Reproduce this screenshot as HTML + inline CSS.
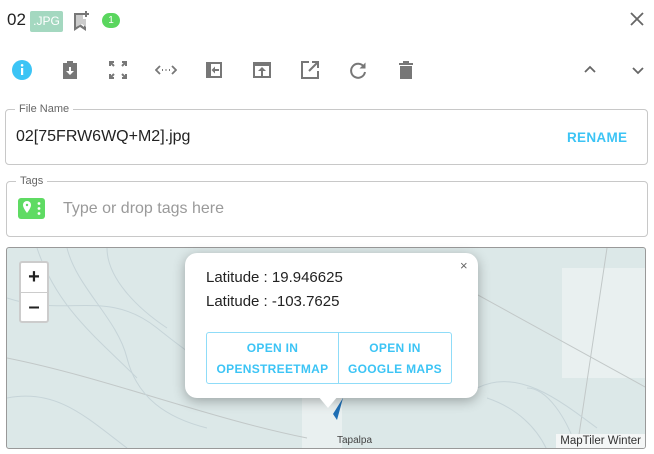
<!DOCTYPE html>
<html><head><style>
*{box-sizing:border-box;margin:0;padding:0}
body{width:654px;height:454px;background:#fff;font-family:"Liberation Sans",sans-serif;position:relative;overflow:hidden;color:#222}
.a{position:absolute}
.ic{position:absolute;top:59px;width:22px;height:22px}
fieldset{position:absolute;border:1px solid #c8c8c8;border-radius:4px}
legend{font-size:11px;color:#666;padding:0 4px;margin-left:9px}
.btn{position:absolute;top:332px;height:52px;border:1px solid #8fdcf8;color:#3cc4f5;font-size:12px;font-weight:bold;text-align:center;line-height:21px;padding-top:5px;letter-spacing:.3px}
</style></head><body>
<div class="a" style="left:7px;top:10px;font-size:17px">02</div>
<div class="a" style="left:30px;top:11px;width:33px;height:21px;background:#a4d8c0;color:#fff;font-size:12px;line-height:21px;text-align:center;border-radius:2px">.JPG</div>
<svg class="a" style="left:72px;top:10px" width="20" height="22" viewBox="0 0 20 22"><path d="M2 3h9v2H4v12l4-3 4 3V9h2v12l-6-4-6 4z" fill="#777"/><path d="M4 5h7v4h3v8l-4-3-6 3z" fill="#ccc"/><path d="M14 1v6M11 4h6" stroke="#777" stroke-width="2"/></svg>
<div class="a" style="left:102px;top:13px;width:18px;height:15px;background:#5ad65e;border-radius:8px;color:#fff;font-size:10px;text-align:center;line-height:15px">1</div>
<svg class="a" style="left:628px;top:10px" width="18" height="18"><path d="M3 3l12 12M15 3L3 15" stroke="#666" stroke-width="1.8"/></svg>

<svg class="ic" style="left:11px" viewBox="0 0 22 22"><circle cx="11" cy="11" r="10" fill="#3cc4f5"/><rect x="10" y="9" width="2.2" height="7" fill="#fff"/><circle cx="11.1" cy="6.3" r="1.3" fill="#fff"/></svg>
<svg class="ic" style="left:59px" viewBox="0 0 22 22"><path d="M4 4h4V2h6v2h4v16H4z" fill="#777"/><path d="M10 8h2v4h3l-4 4-4-4h3z" fill="#fff"/></svg>
<svg class="ic" style="left:107px" viewBox="0 0 22 22" fill="none" stroke="#777" stroke-width="2"><path d="M3 7V3h4M3 3l4 4M15 3h4v4M19 3l-4 4M19 15v4h-4M19 19l-4-4M7 19H3v-4M3 19l4-4"/></svg>
<svg class="ic" style="left:155px" viewBox="0 0 22 22" fill="none" stroke="#777" stroke-width="1.8"><path d="M5 7l-4 4 4 4M17 7l4 4-4 4"/><path d="M7 11h1M10.5 11h1M14 11h1" stroke-width="2"/></svg>
<svg class="ic" style="left:203px" viewBox="0 0 22 22"><path d="M3 3h16v16H3z" fill="#777"/><path d="M6 5h11v12H6z" fill="#fff"/><path d="M3 3h5v16H3z" fill="#777"/><path d="M16 10H12V7.5L8.5 11l3.5 3.5V12h4z" fill="#777"/></svg>
<svg class="ic" style="left:251px" viewBox="0 0 22 22"><path d="M2 3h18v16H2z" fill="#777"/><path d="M4 7h14v10H4z" fill="#fff"/><path d="M11 8l-4 4h3v5h2v-5h3z" fill="#777"/></svg>
<svg class="ic" style="left:299px" viewBox="0 0 22 22" fill="none" stroke="#777" stroke-width="2"><path d="M10 3H3v16h16v-7"/><path d="M13 3h6v6M19 3l-9 9"/></svg>
<svg class="ic" style="left:347px" viewBox="0 0 22 22" fill="none" stroke="#777" stroke-width="2"><path d="M17 8a7 7 0 1 0 1 5"/><path d="M18.5 3.5v6h-6z" fill="#777" stroke="none"/></svg>
<svg class="ic" style="left:395px" viewBox="0 0 22 22"><path d="M4 4h14v2H4zM8 2h6v2H8zM5 7h12v13H5z" fill="#777"/></svg>
<svg class="ic" style="left:579px" viewBox="0 0 22 22" fill="none" stroke="#666" stroke-width="1.8"><path d="M6 13l5-5 5 5"/></svg>
<svg class="ic" style="left:627px" viewBox="0 0 22 22" fill="none" stroke="#666" stroke-width="1.8"><path d="M6 9l5 5 5-5"/></svg>

<fieldset style="left:5px;top:103px;width:643px;height:62px"><legend>File Name</legend></fieldset>
<div class="a" style="left:16px;top:128px;font-size:16px;color:#222">02[75FRW6WQ+M2].jpg</div>
<div class="a" style="left:567px;top:130px;font-size:13.5px;font-weight:bold;color:#3cc4f5;letter-spacing:.3px">RENAME</div>

<fieldset style="left:6px;top:175px;width:642px;height:62px"><legend>Tags</legend></fieldset>
<div class="a" style="left:18px;top:198px;width:27px;height:21px;background:#5fdb63;border-radius:3px"></div>
<svg class="a" style="left:18px;top:198px" width="27" height="21"><path d="M9 3a4 4 0 0 1 4 4c0 3-4 8-4 8s-4-5-4-8a4 4 0 0 1 4-4z" fill="#fff"/><circle cx="9" cy="7" r="1.2" fill="#5fdb63"/><circle cx="21" cy="5.5" r="1.4" fill="#fff"/><circle cx="21" cy="10.5" r="1.4" fill="#fff"/><circle cx="21" cy="15.5" r="1.4" fill="#fff"/></svg>
<div class="a" style="left:63px;top:200px;font-size:16px;color:#9a9a9a">Type or drop tags here</div>

<div class="a" style="left:6px;top:247px;width:640px;height:202px;border:1px solid #999;border-radius:3px;background:#dce8e8;overflow:hidden">
<svg width="640" height="202" style="position:absolute;left:0;top:0">
<path d="M295 150h40v52h-40zM555 20h85v110h-85z" fill="#e9f0f0"/>
<path d="M440 30l200 110M600 0l-30 200M0 110c100 20 200 60 300 80" stroke="#c2c8c8" fill="none"/>
<g stroke="#c6d4d8" fill="none">
<path d="M0 50c60 20 100 -10 150 30s80 60 130 50M30 0c20 60 60 90 100 130M470 140c40 -20 80 10 120 40"/>
<path d="M60 0c10 40 50 70 60 110s40 60 80 70M100 0c0 30 30 60 60 80M0 150c50 -10 80 20 120 50M480 150c30 10 50 30 60 52M520 140c20 0 40 30 50 62"/>
</g>
</svg>
<div class="a" style="left:12px;top:13px;width:30px;height:62px;background:#fff;border:2px solid #ccc;border-radius:3px">
<div style="height:30px;border-bottom:1px solid #ccc;text-align:center;font-size:20px;font-weight:bold;line-height:28px">+</div>
<div style="text-align:center;font-size:20px;font-weight:bold;line-height:28px">–</div></div>
<div class="a" style="left:330px;top:187px;font-size:10px;color:#444">Tapalpa</div>
<div class="a" style="right:0;bottom:0;background:#f4f6f6;font-size:11.5px;color:#333;padding:1px 4px">MapTiler Winter</div>
<svg class="a" style="left:322px;top:150px" width="16" height="22"><path d="M8 22l-4-6 10-16z" fill="#1f6fb5"/></svg>
</div>

<div class="a" style="left:185px;top:253px;width:293px;height:145px;background:#fff;border-radius:12px;box-shadow:0 3px 12px rgba(0,0,0,.3)"></div>
<div class="a" style="left:318px;top:396px;width:0;height:0;border-left:10px solid transparent;border-right:10px solid transparent;border-top:12px solid #fff"></div>
<div class="a" style="left:460px;top:258px;font-size:13px;color:#666">×</div>
<div class="a" style="left:206px;top:269px;font-size:15px;color:#222">Latitude : 19.946625</div>
<div class="a" style="left:206px;top:293px;font-size:15px;color:#222">Latitude : -103.7625</div>
<div class="btn" style="left:206px;width:133px;border-radius:3px 0 0 3px">OPEN IN<br>OPENSTREETMAP</div>
<div class="btn" style="left:338px;width:114px;border-radius:0 3px 3px 0">OPEN IN<br>GOOGLE MAPS</div>
</body></html>
